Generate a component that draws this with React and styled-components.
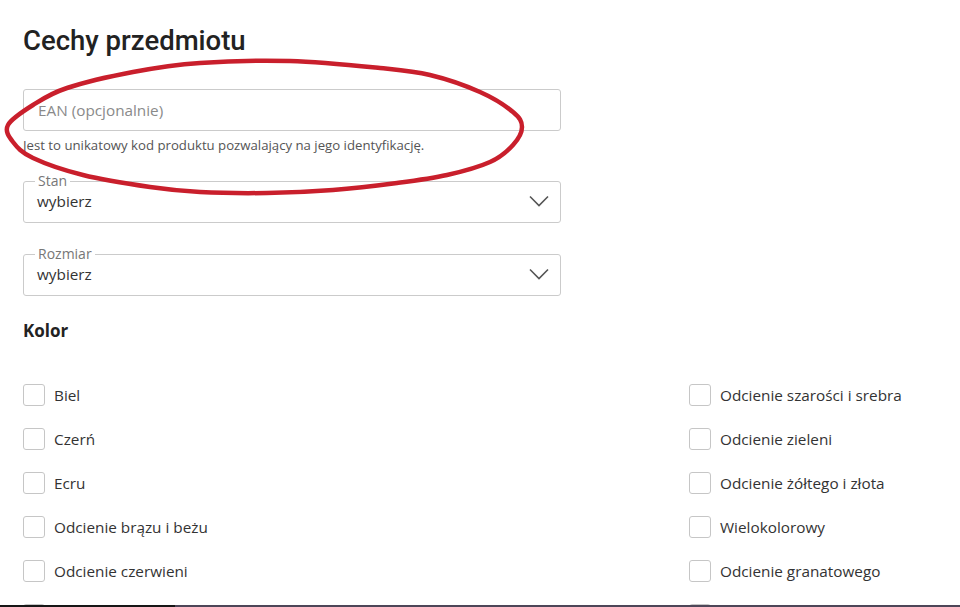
import React from 'react';
import styled, { createGlobalStyle } from 'styled-components';

const GlobalStyle = createGlobalStyle`
  html, body {
    margin: 0;
    padding: 0;
    background: #fff;
    overflow: hidden;
  }

  body {
    font-family: "Open Sans", "Liberation Sans", sans-serif;
    color: #333;
  }
`;

const Page = styled.main`
  position: relative;
  height: 607px;
  padding: 24px 0 0 23px;
  box-sizing: border-box;
  overflow: hidden;
`;

const Title = styled.h2`
  margin: 0;
  font-family: Roboto, "Liberation Sans", sans-serif;
  font-weight: 500;
  font-size: 27.5px;
  line-height: 34px;
  color: #222;
`;

const Form = styled.div`
  width: 538px;
  display: flex;
  flex-direction: column;
`;

const TextInput = styled.input`
  margin-top: 31px;
  height: 42px;
  box-sizing: border-box;
  border: 1px solid #cbcbcb;
  border-radius: 3px;
  padding: 0 14px;
  font-family: inherit;
  font-size: 15.3px;
  color: #333;
  outline: none;

  &::placeholder {
    color: #8a8a8a;
  }
`;

const Hint = styled.p`
  margin: 6px 0 0;
  font-size: 13.2px;
  line-height: 17px;
  color: #555;
`;

const Fieldset = styled.fieldset`
  margin: ${({ mtop }) => mtop}px 0 0;
  padding: 0 11px 10px 13px;
  border: 1px solid #cbcbcb;
  border-radius: 3px;
  min-width: 0;
`;

const Legend = styled.legend`
  margin-left: -2px;
  padding: 0 3px;
  font-size: 14px;
  line-height: 14px;
  color: #777;
`;

const SelectRow = styled.div`
  display: flex;
  align-items: center;
  justify-content: space-between;
  height: 22px;
  margin-top: 2px;
  font-size: 15.3px;
  color: #333;
`;

const SectionHeading = styled.h3`
  margin: 23px 0 0;
  font-size: 17px;
  line-height: 24px;
  font-weight: 700;
  color: #222;
`;

const ColorGrid = styled.div`
  display: grid;
  grid-template-columns: 666px 1fr;
  row-gap: 22px;
  margin-top: 41px;
`;

const Option = styled.label`
  display: flex;
  align-items: center;
  gap: 9px;
  height: 22px;
  font-size: 15.3px;
  line-height: 22px;
  color: #333;
`;

const Box = styled.input`
  appearance: none;
  margin: 0;
  width: 22px;
  height: 22px;
  box-sizing: border-box;
  border: 1px solid #c6c6c6;
  border-radius: 3px;
  background: #fff;
`;

const Annotation = styled.svg`
  position: absolute;
  inset: 0;
  pointer-events: none;
`;

const ScreenEdge = styled.div`
  position: fixed;
  left: 0;
  right: 0;
  bottom: 0;
  height: 2px;
  background: linear-gradient(to right, #161616 0 175px, #4d4658 175px);
`;

const Chevron = () => (
  <svg width="20" height="12" viewBox="0 0 20 12">
    <path d="M1 1.5 L10 10.5 L19 1.5" fill="none" stroke="#555" strokeWidth="1.6" />
  </svg>
);

const SelectField = ({ label, value, mtop }) => (
  <Fieldset mtop={mtop}>
    <Legend>{label}</Legend>
    <SelectRow>
      <span>{value}</span>
      <Chevron />
    </SelectRow>
  </Fieldset>
);

// hand drawn loop round the EAN field
const loop = [
  [8, 125], [33, 105], [67, 88], [133, 72], [200, 63], [290, 61], [380, 68],
  [430, 75], [480, 92], [513, 112], [522, 127], [513, 145], [490, 162],
  [447, 175], [397, 183], [333, 190], [267, 193], [200, 192], [150, 187],
  [83, 175], [33, 158], [13, 142],
];

const smoothPath = (pts) => {
  const n = pts.length;
  let d = `M${pts[0][0]} ${pts[0][1]}`;
  for (let i = 0; i < n; i++) {
    const p0 = pts[(i - 1 + n) % n];
    const p1 = pts[i];
    const p2 = pts[(i + 1) % n];
    const p3 = pts[(i + 2) % n];
    const c1 = [p1[0] + (p2[0] - p0[0]) / 6, p1[1] + (p2[1] - p0[1]) / 6];
    const c2 = [p2[0] - (p3[0] - p1[0]) / 6, p2[1] - (p3[1] - p1[1]) / 6];
    d += ` C${c1[0]} ${c1[1]} ${c2[0]} ${c2[1]} ${p2[0]} ${p2[1]}`;
  }
  return d;
};

const colors = [
  ['Biel', 'Odcienie szarości i srebra'],
  ['Czerń', 'Odcienie zieleni'],
  ['Ecru', 'Odcienie żółtego i złota'],
  ['Odcienie brązu i beżu', 'Wielokolorowy'],
  ['Odcienie czerwieni', 'Odcienie granatowego'],
  ['Odcienie fioletu', 'Odcienie różu'],
];

const App = () => (
  <>
    <GlobalStyle />
    <Page>
      <Title>Cechy przedmiotu</Title>
      <Form>
        <TextInput placeholder="EAN (opcjonalnie)" />
        <Hint>Jest to unikatowy kod produktu pozwalający na jego identyfikację.</Hint>
        <SelectField label="Stan" value="wybierz" mtop={20} />
        <SelectField label="Rozmiar" value="wybierz" mtop={24} />
      </Form>
      <SectionHeading>Kolor</SectionHeading>
      <ColorGrid>
        {colors.flat().map((name) => (
          <Option key={name}>
            <Box type="checkbox" />
            {name}
          </Option>
        ))}
      </ColorGrid>
      <Annotation width="960" height="607">
        <path d={smoothPath(loop)} fill="none" stroke="#c91f2c" strokeWidth="4.5" strokeLinejoin="round" />
      </Annotation>
    </Page>
    <ScreenEdge />
  </>
);

export default App;
